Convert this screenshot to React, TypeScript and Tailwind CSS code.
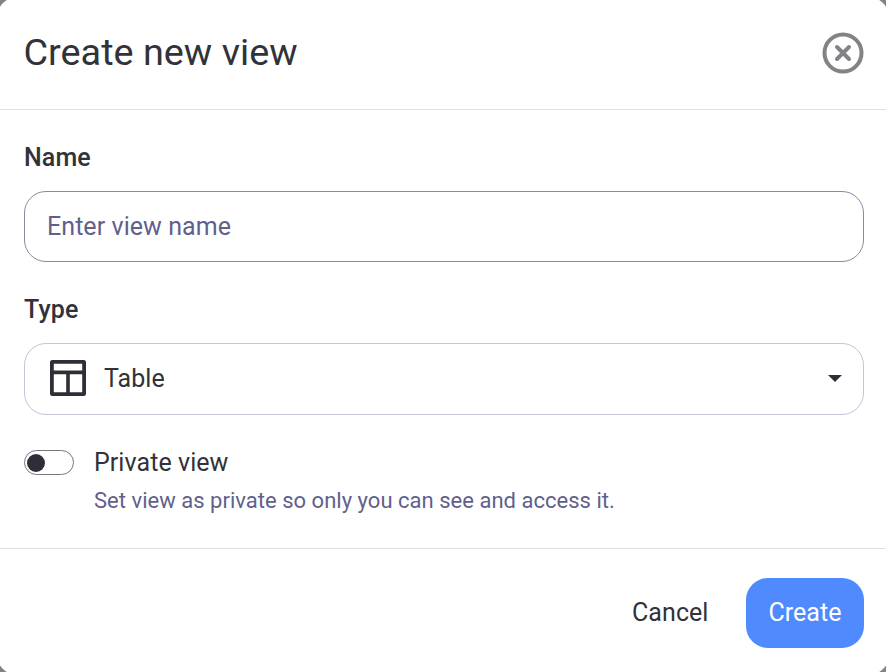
import { useState } from "react";

const CloseIcon = () => (
  <svg width="42" height="42" viewBox="0 0 42 42" fill="none" stroke="#838387" strokeWidth="4" strokeLinecap="round">
    <circle cx="21" cy="21" r="18.5" />
    <path d="M15 15l12 12M27 15L15 27" />
  </svg>
);

const TableIcon = () => (
  <svg width="36" height="36" viewBox="0 0 36 36" fill="none" stroke="#2e2e38" strokeWidth="3.8" strokeLinejoin="round">
    <rect x="1.9" y="1.9" width="32.2" height="32.2" rx="0.4" />
    <path d="M2 12.4h32M18 12.4v21.6" strokeWidth="3.6" />
  </svg>
);

const App = () => {
  const [name, setName] = useState<string>("");
  const [isPrivate, setIsPrivate] = useState<boolean>(false);

  return (
    <div className="h-[672px] w-[886px] overflow-hidden bg-[#838387] font-['Roboto',sans-serif] text-[#323239]">
      <main className="-m-1 flex h-[680px] w-[894px] flex-col rounded-3xl bg-white p-1">
        <header className="-mx-1 flex h-[110px] items-center justify-between border-b border-[#e0e0e3] pr-[22px] pl-6">
          <h1 className="-mt-1.5 ml-[3.5px] text-[37.8px] leading-[44px]">Create new view</h1>
          <button type="button" aria-label="Close" className="-mt-[3px] mr-1">
            <CloseIcon />
          </button>
        </header>
        <form className="flex h-[438px] flex-col pt-[33px] pr-[22px] pl-6">
          <label htmlFor="name" className="text-[25px] leading-[30px] font-medium tracking-[0.1px]">
            Name
          </label>
          <input
            id="name"
            type="text"
            value={name}
            onChange={(e) => setName(e.target.value)}
            placeholder="Enter view name"
            className="mt-[18px] h-[71px] rounded-[22px] border border-[#8b8a9e] px-[22px] text-[25px] tracking-[0.06px] outline-none placeholder:text-[#625f8c]"
          />
          <span className="mt-[33px] text-[25px] leading-[30px] font-medium tracking-[0.1px]">Type</span>
          <button
            type="button"
            className="mt-[18px] flex h-[72px] items-center rounded-[22px] border border-[#c5c4d8] pr-[21px] pb-[2px] pl-[25px] text-[25px]"
          >
            <TableIcon />
            <span className="mt-[2px] ml-[18px] tracking-[0.06px]">Table</span>
            <svg className="ml-auto" width="14" height="7" viewBox="0 0 14 7" fill="#2e2e38">
              <path d="M0 0h14L7 7z" />
            </svg>
          </button>
          <div className="mt-[33px] flex">
            <button
              type="button"
              role="switch"
              aria-checked={isPrivate}
              aria-label="Private view"
              onClick={() => setIsPrivate(!isPrivate)}
              className={`mt-[2px] flex h-[25px] w-[50px] items-center rounded-full border border-[#77777f] px-[2px] ${isPrivate ? "justify-end" : ""}`}
            >
              <span className="size-[18px] rounded-full bg-[#2e2e38]" />
            </button>
            <div className="ml-5">
              <p className="text-[25px] leading-[30px] tracking-[0.06px]">Private view</p>
              <p className="mt-2 text-[22px] leading-[30px] tracking-[0.02px] text-[#625f8c]">
                Set view as private so only you can see and access it.
              </p>
            </div>
          </div>
        </form>
        <footer className="-mx-1 flex grow items-center justify-end border-t border-[#e0e0e3] pt-[5px] pr-[26px] text-[25px] tracking-[0.06px]">
          <button type="button" className="mr-[37.5px]">
            Cancel
          </button>
          <button type="button" className="h-[70px] w-[118px] rounded-[22px] bg-[#4f8bff] text-white">
            Create
          </button>
        </footer>
      </main>
    </div>
  );
};

export default App;
